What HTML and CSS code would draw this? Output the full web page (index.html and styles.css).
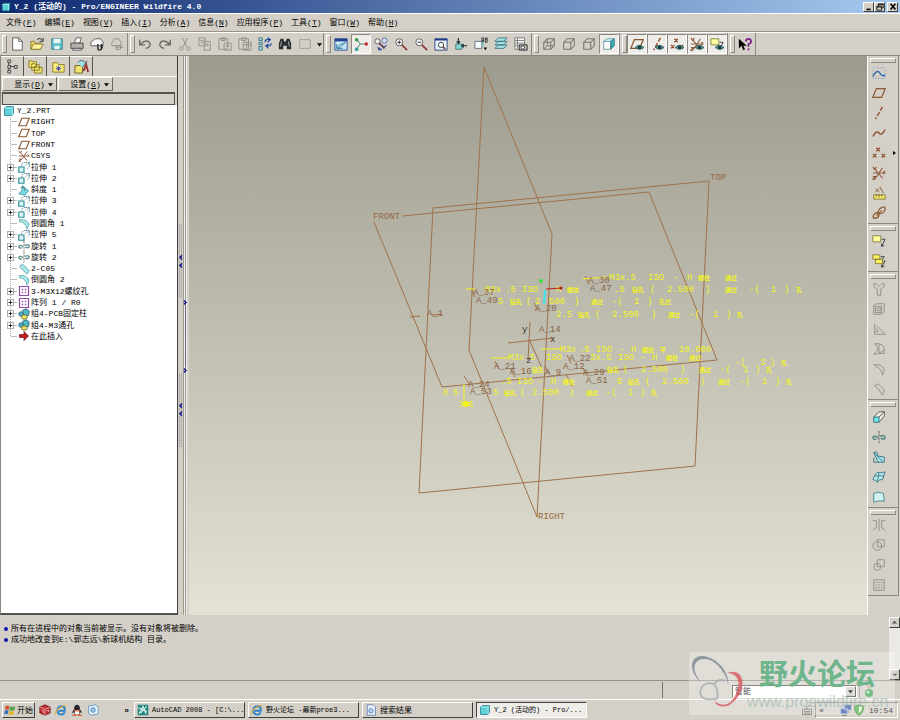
FILE: index.html
```html
<!DOCTYPE html>
<html lang="zh-CN">
<head>
  <meta charset="UTF-8">
  <title>Y_2 (活动的) - Pro/ENGINEER Wildfire 4.0</title>
  <link rel="stylesheet" href="styles.css">
</head>
<body>
  <svg class="sprite" aria-hidden="true">
    <symbol id="part" viewBox="0 0 16 16"><path d="M2 4l3-2h9v9l-2 3H2z" fill="#5cd0d6" stroke="#2a6f86"/><path d="M2 4h10v10M12 4l2-2" fill="none" stroke="#b8f4f4"/></symbol>
    <symbol id="plane" viewBox="0 0 16 16"><path d="M5 3h10l-4 10H1z" fill="none" stroke="#8a5a35" stroke-width="1.5"/></symbol>
    <symbol id="axis" viewBox="0 0 16 16"><path d="M12 1L4 15" fill="none" stroke="#8f4a2c" stroke-width="1.6" stroke-dasharray="5 2"/></symbol>
    <symbol id="points" viewBox="0 0 16 16"><path d="M5 2l4 4m0-4L5 6M1 9l4 4m0-4l-4 4M11 9l4 4m0-4l-4 4" fill="none" stroke="#8f4a2c" stroke-width="1.4"/></symbol>
    <symbol id="csys" viewBox="0 0 16 16"><path d="M3 3l9 11M12 2L4 14M1 8h12M1 1l2 3 2-3M13 6l2 3m0-3l-2 3M1 12h3l-3 3h3" fill="none" stroke="#8f5a3c" stroke-width="1.3"/></symbol>
    <symbol id="eye" viewBox="0 0 16 16"><path d="M6 12q4.500-5 10 0-5 4-10 0z" fill="#5b9a90" stroke="#2b5753"/><circle cx="11" cy="12" r="2" fill="#123b44"/></symbol>
    <symbol id="extrude" viewBox="0 0 16 16"><path d="M1 8h7v7H1z" fill="#d8f4f4" stroke="#2f8d95" stroke-width="1.5"/><path d="M5 7V4l3-2h7v6l-3 3M10 6l5-4M10 2h5v5" fill="none" stroke="#477e8e" stroke-dasharray="2 1"/></symbol>
    <symbol id="revolve" viewBox="0 0 16 16"><path d="M8 1v14" stroke="#555" stroke-dasharray="3 1"/><path d="M7 9q-5-4-6 0 1 3 4 1M9 7q6-2 6 2-2 3-5 0" fill="none" stroke="#407c75" stroke-width="1.500"/></symbol>
    <symbol id="draft" viewBox="0 0 16 16"><path d="M6 2l8 7-5 6-8-2 4-4z" fill="#7ad9de" stroke="#2c8894"/><path d="M3 5q6-2 6 4" fill="none" stroke="#567"/></symbol>
    <symbol id="round" viewBox="0 0 16 16"><path d="M2 2q9-1 13 6l-3 7Q11 6 2 5z" fill="#a5e9ea" stroke="#5c9fa4"/></symbol>
    <symbol id="chamfer" viewBox="0 0 16 16"><path d="M3 3l4-1 8 8-3 5-9-9z" fill="#a8e5e7" stroke="#5c9fa4"/></symbol>
    <symbol id="pattern" viewBox="0 0 16 16"><path d="M2 2h12v12H2z" fill="#fff" stroke="#8f4da4" stroke-width="1.600"/><path d="M5 5h2v2H5zM9 5h2v2H9zM5 9h2v2H5zM9 9h2v2H9z" fill="#a05aae"/></symbol>
    <symbol id="group" viewBox="0 0 16 16"><path d="M6 3l5-2 4 3-1 6-5 2z" fill="#4fbcc4" stroke="#24506c"/><circle cx="4" cy="8" r="3" fill="#51b2ce" stroke="#24506c"/><path d="M5 10l3-1 4 1v4l-4 1-3-1z" fill="#ece56a" stroke="#62601f"/></symbol>
    <symbol id="insert" viewBox="0 0 16 16"><path d="M2 6h6V2l6 6-6 6v-4H2z" fill="#c01c22" stroke="#72181b"/></symbol>
    <symbol id="plus" viewBox="0 0 9 9"><path d="M.5.5h8v8h-8z" fill="#fff" stroke="#888"/><path d="M2 4.500h5M4.500 2v5" stroke="#000"/></symbol>
    <symbol id="note" viewBox="0 0 16 16"><path d="M1 2h9v7H1z" fill="#ffffa0" stroke="#7c7a3c"/><path d="M11 6h4l-4 8m0-3v3l3-1" fill="none" stroke="#333"/></symbol>
    <symbol id="box" viewBox="0 0 16 16"><path d="M2 6h8v8H2zM2 6l4-4h8v8l-4 4M10 6l4-4" fill="none" stroke="#77746d" stroke-width="1.200"/></symbol>
    <symbol id="lens" viewBox="0 0 16 16"><circle cx="6" cy="6" r="4" fill="#f4f4f4" stroke="#555"/><path d="M9 9l6 6" stroke="#8c3f36" stroke-width="2"/></symbol>
    <symbol id="ie" viewBox="0 0 16 16"><path d="M13 11q-2 4-6 3-4-1-4-6 1-5 6-5 5 1 4 6H5" fill="none" stroke="#2b83cf" stroke-width="2.400"/><path d="M1 14Q-1 10 8 4q6-4 7 0" fill="none" stroke="#e0b13a" stroke-width="1.400"/></symbol>
    <symbol id="down" viewBox="0 0 8 8"><path d="M0 2h8L4 7z" fill="#000"/></symbol>
  </svg>

  <header class="titlebar">
    <svg class="icon-sm"><use href="#part"/></svg>
    <h1>Y_2 (活动的) - Pro/ENGINEER Wildfire 4.0</h1>
    <div class="window-buttons">
      <button aria-label="最小化"><svg viewBox="0 0 10 10"><path d="M2 8h5" stroke="#000" stroke-width="2"/></svg></button>
      <button aria-label="还原"><svg viewBox="0 0 10 10"><path d="M3 4V1h6v5H7M1 4h6v5H1zM1 5h6M3 2h6" fill="none" stroke="#000"/></svg></button>
      <button class="close" aria-label="关闭"><svg viewBox="0 0 10 10"><path d="M2 1l6 7M8 1L2 8" stroke="#000" stroke-width="2"/></svg></button>
    </div>
  </header>

  <nav class="menubar">
    <button>文件(<u>F</u>)</button>
    <button>编辑(<u>E</u>)</button>
    <button>视图(<u>V</u>)</button>
    <button>插入(<u>I</u>)</button>
    <button>分析(<u>A</u>)</button>
    <button>信息(<u>N</u>)</button>
    <button>应用程序(<u>P</u>)</button>
    <button>工具(<u>T</u>)</button>
    <button>窗口(<u>W</u>)</button>
    <button>帮助(<u>H</u>)</button>
  </nav>

  <div class="toolbar">
    <div class="tool-group">
      <button aria-label="新建"><svg viewBox="0 0 16 16"><path d="M3 1h7l4 4v10H3z" fill="#fff" stroke="#555"/><path d="M10 1v4h4" fill="none" stroke="#555"/></svg></button>
      <button aria-label="打开"><svg viewBox="0 0 16 16"><path d="M1 14V5h4l1 2h6v7z" fill="#f0dc62" stroke="#84712a"/><path d="M1 14l3-6h11l-3 6z" fill="#fff3a0" stroke="#84712a"/><path d="M8 3q4-3 6 1m1-3v4h-4" fill="none" stroke="#222"/></svg></button>
      <button aria-label="保存"><svg viewBox="0 0 16 16"><path d="M2 2h12v12H2z" fill="#59bfc8" stroke="#3d7986"/><path d="M4 2h8v5H4zM5 10h6v4H5z" fill="#e8f6f6"/></svg></button>
      <button aria-label="打印"><svg viewBox="0 0 16 16"><path d="M5 7l2-6h6l-2 6z" fill="#fff" stroke="#555"/><path d="M1 7h14v6H1z" fill="#b5b2aa" stroke="#444"/><path d="M3 13h10v2H3z" fill="#eee" stroke="#555"/></svg></button>
      <button aria-label="发送"><svg viewBox="0 0 16 16"><path d="M1 6l5-4h6l3 4v4H1z" fill="#f8f8f8" stroke="#555"/><path d="M9 8v4q0 3 2 3t3-3l-1-4v5" fill="none" stroke="#222" stroke-width="1.500"/></svg></button>
      <button aria-label="链接"><svg viewBox="0 0 16 16" class="off"><path d="M2 7l3-5h5l3 5v3H2zM7 12h3m1 0h4M7 10h5v4H7z"/></svg></button>
    </div>
    <div class="tool-group">
      <button aria-label="撤消"><svg viewBox="0 0 16 16" class="undo"><path d="M3 8q8-7 11 0 0 4-5 5M2 3v6h6"/></svg></button>
      <button aria-label="重做"><svg viewBox="0 0 16 16" class="undo"><path d="M13 8Q5 1 2 8q0 4 5 5M14 3v6H8"/></svg></button>
      <button aria-label="剪切"><svg viewBox="0 0 16 16" class="off"><path d="M5 1l5 10M11 1L6 11"/><circle cx="4" cy="13" r="2"/><circle cx="12" cy="13" r="2"/></svg></button>
      <button aria-label="复制"><svg viewBox="0 0 16 16" class="off"><path d="M1 1h7v9H1zM7 5h7v10H7zM3 4h3M3 6h3M9 8h3M9 10h3"/></svg></button>
      <button aria-label="粘贴"><svg viewBox="0 0 16 16" class="off"><path d="M1 2h10v12H1zM4 1h4v3H4zM7 7h8v8H7zM9 10h4"/></svg></button>
      <button aria-label="选择性粘贴"><svg viewBox="0 0 16 16" class="off"><path d="M1 2h11v12H1zM4 1h5v3H4zM6 6h9v9H6zM6 9h9M10 6v9"/></svg></button>
      <button aria-label="重新生成"><svg viewBox="0 0 16 16"><path d="M1 1h4v3H1zM1 6h4v3H1zM1 11h4v4H1z" fill="#8bd8da" stroke="#4b7580"/><path d="M8 6q0-4 5-3m-2-2l3 2-3 3M15 7q0 4-5 3m2 3l-3-3 3-2" fill="none" stroke="#254d9d" stroke-width="1.500"/></svg></button>
      <button aria-label="查找"><svg viewBox="0 0 16 16"><path d="M3 2h3l1 3h2l1-3h3l2 5v7h-5v-4H6v4H1V7z" fill="#292d31"/><path d="M4 5L3 11M12 5l1 6" stroke="#b6c3c6"/></svg></button>
      <button aria-label="选取框"><svg viewBox="0 0 16 16" class="off"><path d="M2 3h12v10H2z" stroke-dasharray="3 1"/></svg></button>
      <button class="drop" aria-label="选取方式"><svg viewBox="0 0 8 8"><use href="#down"/></svg></button>
    </div>
    <div class="tool-group">
      <button aria-label="重画"><svg viewBox="0 0 16 16"><path d="M1 2h14v13H1z" fill="#c6e7f6" stroke="#244c91"/><path d="M1 2h14v3H1z" fill="#233f91"/><path d="M13 6l-6 6-3 1 1-3zM3 8v5h7" fill="none" stroke="#2f7698"/></svg></button>
      <button class="on" aria-label="旋转中心"><svg viewBox="0 0 16 16"><path d="M3 2l4 6h7M7 8l-4 6" fill="none" stroke="#3c7c66"/><circle cx="3" cy="3" r="2" fill="#2b9a45"/><circle cx="14" cy="8" r="2" fill="#c1262b"/><circle cx="3" cy="14" r="2" fill="#2a9b94"/></svg></button>
      <button aria-label="定向模式"><svg viewBox="0 0 16 16"><circle cx="4" cy="5" r="3" fill="#eee" stroke="#555"/><circle cx="12" cy="4" r="3" fill="#d6def3" stroke="#536ba9"/><path d="M6 7l6 6" stroke="#603f5f" stroke-width="2"/><path d="M14 9q0 3-3 2M4 12q1 3 5 2" fill="none" stroke="#263c95"/><path d="M5 11v4h4z" fill="#263c95"/></svg></button>
      <button aria-label="放大"><svg viewBox="0 0 16 16"><use href="#lens"/><path d="M4 6h4M6 4v4" stroke="#222"/></svg></button>
      <button aria-label="缩小"><svg viewBox="0 0 16 16"><use href="#lens"/><path d="M4 6h4" stroke="#222"/></svg></button>
      <button aria-label="重新调整"><svg viewBox="0 0 16 16"><path d="M1 2h14v13H1z" fill="#e7f1f6" stroke="#24407e"/><path d="M1 2h14v2H1z" fill="#203a8c"/><circle cx="8" cy="9" r="3" fill="#fff" stroke="#333"/><path d="M10 11l3 3" stroke="#744" stroke-width="2"/></svg></button>
      <button aria-label="重定向"><svg viewBox="0 0 16 16"><path d="M2 8h7v6H2z" fill="#8bd3d6" stroke="#477"/><path d="M5 1v6m-2-2l2 2 2-2M15 10H9m2-2l-2 2 2 2" fill="none" stroke="#142f36" stroke-width="1.300"/></svg></button>
      <button aria-label="视图列表"><svg viewBox="0 0 16 16"><path d="M1 5h8v8H1z" fill="#f8fbfb" stroke="#567"/><path d="M9 5l2-2v7l-2 3" fill="#70bfc5"/><path d="M9 6V1h2v5M9 4h2M13 1h2v5h-2zM13 3h2" fill="none" stroke="#333"/><path d="M11 12h4l-2 3z"/></svg></button>
      <button aria-label="层"><svg viewBox="0 0 16 16"><path d="M1 13l4-4h10l-4 4zM1 9l4-4h10l-4 4zM1 5l4-4h10l-4 4z" fill="#a8dde1" stroke="#397681"/></svg></button>
      <button aria-label="视图管理器"><svg viewBox="0 0 16 16"><path d="M1 1h11v13H1zM1 4h11M1 7h11M1 10h11M4 1v13" fill="#f6f6f6" stroke="#777"/><path d="M6 9h9v6H6z" fill="#c4c7c7" stroke="#222"/><circle cx="10" cy="12" r="2" fill="#fff" stroke="#222"/></svg></button>
    </div>
    <div class="tool-group">
      <button aria-label="线框"><svg viewBox="0 0 16 16"><use href="#box"/><path d="M6 2v8h8M6 10l-4 4" fill="none" stroke="#77746d"/></svg></button>
      <button aria-label="隐藏线"><svg><use href="#box"/></svg></button>
      <button aria-label="无隐藏线"><svg><use href="#box"/></svg></button>
      <button class="on" aria-label="着色"><svg viewBox="0 0 16 16"><path d="M2 5h8v9H2z" fill="#fff" stroke="#5e9ba4"/><path d="M2 5l4-3h8l-4 3z" fill="#d1f4f4" stroke="#5e9ba4"/><path d="M10 5l4-3v8l-4 4z" fill="#3bb1b7" stroke="#32717e"/></svg></button>
    </div>
    <div class="tool-group">
      <button class="on" aria-label="基准平面"><svg viewBox="0 0 16 16"><use href="#plane"/><use href="#eye"/></svg></button>
      <button class="on" aria-label="基准轴"><svg viewBox="0 0 16 16"><use href="#axis"/><use href="#eye"/></svg></button>
      <button class="on" aria-label="基准点"><svg viewBox="0 0 16 16"><use href="#points"/><use href="#eye"/></svg></button>
      <button class="on" aria-label="坐标系"><svg viewBox="0 0 16 16"><use href="#csys"/><use href="#eye"/></svg></button>
      <button class="on" aria-label="注释显示"><svg viewBox="0 0 16 16"><use href="#note"/><use href="#eye"/></svg></button>
    </div>
    <div class="tool-group">
      <button aria-label="上下文帮助"><svg viewBox="0 0 16 16"><path d="M1 2v11l3-3 2 5 2-1-2-4h4z"/><path d="M9 5q0-3 3-3t3 3q0 2-3 3v3M12 13v2" fill="none" stroke="#7c2388" stroke-width="2"/></svg></button>
    </div>
  </div>

  <main class="workspace">
    <aside class="navigator">
      <div class="tabs">
        <button class="tab active" aria-label="模型树"><svg viewBox="0 0 16 16"><path d="M3 1h3v3H3zM3 7h3v3H3zM3 12h3v3H3zM10 7h3v3h-3zM6 8h4M4 4v3M4 10v2" fill="none" stroke="#444"/></svg></button>
        <button class="tab" aria-label="文件夹"><svg viewBox="0 0 16 16"><path d="M1 2h3l1 1h4v6H1zM4 5h3l1 1h4v6H4zM7 8h3l1 1h4v6H7z" fill="#efe56b" stroke="#8b792a"/></svg></button>
        <button class="tab" aria-label="收藏夹"><svg viewBox="0 0 16 16"><path d="M2 4h5l1 2h6v8H2z" fill="#fff27a" stroke="#8b792a"/><path d="M8 7v6M5 10h6M6 8l4 4M10 8l-4 4" stroke="#4b4cad"/></svg></button>
        <button class="tab" aria-label="连接"><svg viewBox="0 0 16 16"><path d="M1 7h8v8H1z" fill="#f2e66d" stroke="#6e6226"/><path d="M4 4q4-5 8 0l2-2-5 7" fill="#a0dce2" stroke="#4c6671"/><path d="M10 13l3-7 2 8" fill="none" stroke="#97372e" stroke-width="2"/></svg></button>
      </div>
      <div class="tree-actions">
        <button>显示(<u>D</u>)<svg><use href="#down"/></svg></button>
        <button>设置(<u>G</u>)<svg><use href="#down"/></svg></button>
      </div>
      <div class="tree-header"></div>
      <div class="tree-pane">
        <ul class="tree">
          <li class="root"><svg class="icon-sm"><use href="#part"/></svg>Y_2.PRT</li>
          <li><i></i><svg class="icon-sm"><use href="#plane"/></svg>RIGHT</li>
          <li><i></i><svg class="icon-sm"><use href="#plane"/></svg>TOP</li>
          <li><i></i><svg class="icon-sm"><use href="#plane"/></svg>FRONT</li>
          <li><i></i><svg class="icon-sm"><use href="#csys"/></svg>CSYS</li>
          <li><i><svg><use href="#plus"/></svg></i><svg class="icon-sm"><use href="#extrude"/></svg>拉伸 1</li>
          <li><i><svg><use href="#plus"/></svg></i><svg class="icon-sm"><use href="#extrude"/></svg>拉伸 2</li>
          <li><i></i><svg class="icon-sm"><use href="#draft"/></svg>斜度 1</li>
          <li><i><svg><use href="#plus"/></svg></i><svg class="icon-sm"><use href="#extrude"/></svg>拉伸 3</li>
          <li><i><svg><use href="#plus"/></svg></i><svg class="icon-sm"><use href="#extrude"/></svg>拉伸 4</li>
          <li><i></i><svg class="icon-sm"><use href="#round"/></svg>倒圆角 1</li>
          <li><i><svg><use href="#plus"/></svg></i><svg class="icon-sm"><use href="#extrude"/></svg>拉伸 5</li>
          <li><i><svg><use href="#plus"/></svg></i><svg class="icon-sm"><use href="#revolve"/></svg>旋转 1</li>
          <li><i><svg><use href="#plus"/></svg></i><svg class="icon-sm"><use href="#revolve"/></svg>旋转 2</li>
          <li><i></i><svg class="icon-sm"><use href="#chamfer"/></svg>2-C05</li>
          <li><i></i><svg class="icon-sm"><use href="#round"/></svg>倒圆角 2</li>
          <li><i><svg><use href="#plus"/></svg></i><svg class="icon-sm"><use href="#pattern"/></svg>3-M3X12螺纹孔</li>
          <li><i><svg><use href="#plus"/></svg></i><svg class="icon-sm"><use href="#pattern"/></svg>阵列 1 / R0</li>
          <li><i><svg><use href="#plus"/></svg></i><svg class="icon-sm"><use href="#group"/></svg>组4-PCB固定柱</li>
          <li><i><svg><use href="#plus"/></svg></i><svg class="icon-sm"><use href="#group"/></svg>组4-M3通孔</li>
          <li><i></i><svg class="icon-sm"><use href="#insert"/></svg>在此插入</li>
        </ul>
      </div>
    </aside>

    <div class="sash">
      <svg viewBox="0 0 10 558" preserveAspectRatio="xMidYMin slice">
        <path d="M5.500 0v558M7.500 0v558" stroke="#9b988f"/><path d="M6.500 0v558M8.500 0v558" stroke="#f2f0eb"/>
        <path d="M1.500 168v74M3.500 168v74M1.500 317v74M3.500 317v74" stroke="#8e8b84" stroke-dasharray="1 1"/>
        <path d="M7.500 249v62" stroke="#34348c" stroke-dasharray="1 1"/>
        <path d="M4 199l-2 2 2 2M4 207l-2 2 2 2M4 347l-2 2 2 2M4 355l-2 2 2 2M6 244l2 2-2 2M6 312l2 2-2 2" fill="none" stroke="#15158c" stroke-width="1.500"/>
      </svg>
    </div>

    <section class="viewport">
      <svg viewBox="189 56 678 558" preserveAspectRatio="xMinYMin meet">
        <!-- datum planes -->
        <g class="datum">
          <path d="M484 67L552 234L537 517L469 350Z"/>
          <path d="M433 208L709 181L695 466L419 493Z"/>
          <path d="M402 216L649 192L717 360L442 387L374 222"/>
          <path d="M508 343L553 338M530 322L528 360M529 339L542 368M410 317l10-1M432 315l10-1" />
          <path d="M471 289l4 8M534 303l4 8M585 276l4 8M567 355l4 8M495 361l4 8M510 368l5 9M583 368l4 8M464 376l6 9M545 366l4 8M566 374l6 12"/>
        </g>
        <g class="datum-name">
          <text x="373" y="219">FRONT</text>
          <text x="710" y="180">TOP</text>
          <text x="538" y="519">RIGHT</text>
        </g>
        <!-- hole notes -->
        <g class="note">
          <path d="M583 279l24-2M466 289h10M541 349h20M491 358h18M464 384v22M459 401l14 6M460 407l12-6M461 404h12"/>
          <circle cx="466" cy="404" r="3"/>
          <text y="280"><tspan x="609">M3x.5</tspan><tspan x="648">ISO</tspan><tspan x="673">-</tspan><tspan x="687">H</tspan><tspan class="cn" x="698">螺栓</tspan><tspan class="cn" x="725">通过</tspan></text>
          <text y="292"><tspan x="485">M3x</tspan><tspan x="505">.5</tspan><tspan x="522">ISO</tspan><tspan x="556">H</tspan><tspan class="cn" x="567">螺纹</tspan><tspan x="614">.5</tspan><tspan class="cn" x="632">钻孔</tspan><tspan x="650">(</tspan><tspan x="667">2.500</tspan><tspan x="705">)</tspan><tspan class="cn" x="725">通过</tspan><tspan x="749">-(</tspan><tspan x="771">1</tspan><tspan x="784">)</tspan><tspan class="cn" x="796">孔</tspan></text>
          <text y="304"><tspan x="498">5</tspan><tspan class="cn" x="510">钻孔</tspan><tspan x="526">(</tspan><tspan x="535">2</tspan><tspan x="549">500</tspan><tspan x="574">)</tspan><tspan class="cn" x="591">通过</tspan><tspan x="612">-(</tspan><tspan x="634">1</tspan><tspan x="647">)</tspan><tspan class="cn" x="659">孔过</tspan></text>
          <text y="317"><tspan x="556">2.5</tspan><tspan class="cn" x="578">钻孔</tspan><tspan x="595">(</tspan><tspan x="612">2.500</tspan><tspan x="651">)</tspan><tspan class="cn" x="668">通过</tspan><tspan x="689">-(</tspan><tspan x="713">1</tspan><tspan x="726">)</tspan><tspan class="cn" x="737">孔</tspan></text>
          <text y="352"><tspan x="560">M3x</tspan><tspan x="579">.5</tspan><tspan x="596">ISO</tspan><tspan x="619">-</tspan><tspan x="631">H</tspan><tspan class="cn" x="642">螺纹</tspan><tspan class="cn" x="660">平</tspan><tspan x="679">10.000</tspan></text>
          <text y="360"><tspan x="508">M3x</tspan><tspan x="530">5</tspan><tspan x="546">ISO</tspan><tspan x="590">3x.5</tspan><tspan x="618">ISO</tspan><tspan x="640">-</tspan><tspan x="652">H</tspan><tspan class="cn" x="666">螺栓</tspan><tspan class="cn" x="689">通过</tspan></text>
          <text y="365"><tspan x="735">-(</tspan><tspan x="760">3</tspan><tspan x="770">)</tspan><tspan class="cn" x="781">孔</tspan></text>
          <text y="372"><tspan class="cn" x="532">钻孔</tspan><tspan class="cn" x="607">钻孔</tspan><tspan x="623">(</tspan><tspan x="641">2.500</tspan><tspan x="680">)</tspan><tspan class="cn" x="699">通过</tspan><tspan x="720">-(</tspan><tspan x="743">1</tspan><tspan x="755">)</tspan><tspan class="cn" x="766">孔</tspan></text>
          <text y="384"><tspan x="501">.5</tspan><tspan x="517">ISO</tspan><tspan x="538">-</tspan><tspan x="551">H</tspan><tspan class="cn" x="563">螺栓</tspan><tspan x="617">5</tspan><tspan class="cn" x="628">钻孔</tspan><tspan x="645">(</tspan><tspan x="662">2.500</tspan><tspan x="700">)</tspan><tspan class="cn" x="718">通过</tspan><tspan x="740">-(</tspan><tspan x="762">1</tspan><tspan x="775">)</tspan><tspan class="cn" x="786">孔</tspan></text>
          <text y="395"><tspan x="443">8</tspan><tspan x="453">5</tspan><tspan x="493">5</tspan><tspan class="cn" x="504">钻孔</tspan><tspan x="520">(</tspan><tspan x="532">2.500</tspan><tspan x="569">)</tspan><tspan class="cn" x="586">通过</tspan><tspan x="606">-(</tspan><tspan x="628">1</tspan><tspan x="640">)</tspan><tspan class="cn" x="651">孔</tspan></text>
        </g>
        <!-- hole axes -->
        <g class="axis-name">
          <text x="427" y="316">A_1</text>
          <text x="473" y="295">A_37</text>
          <text x="476" y="303">A_49</text>
          <text x="535" y="311">A_20</text>
          <text x="539" y="332">A_14</text>
          <text x="588" y="283">A_30</text>
          <text x="590" y="291">A_47</text>
          <text x="494" y="369">A_21</text>
          <text x="510" y="374">A_16</text>
          <text x="545" y="375">A_9</text>
          <text x="569" y="361">A_22</text>
          <text x="563" y="369">A_12</text>
          <text x="583" y="375">A_29</text>
          <text x="586" y="383">A_51</text>
          <text x="468" y="387">A_24</text>
          <text x="470" y="394">A_53</text>
        </g>
        <g class="csys-name">
          <text x="522" y="332">y</text>
          <text x="550" y="342">x</text>
          <text x="526" y="363">z</text>
        </g>
        <circle cx="541" cy="281" r="2" fill="#39e341"/>
        <path d="M546 289l15-1" stroke="#c61818"/>
        <circle cx="561" cy="288" r="1.500" fill="#b01414"/>
        <path d="M545 290l-1 14" stroke="#3ce6e6" stroke-width="2"/>
      </svg>
    </section>

    <div class="side-toolbar">
      <div class="side-group">
        <button aria-label="草绘"><svg viewBox="0 0 16 16"><path d="M1 2h14M1 14h14M1 5v7M15 5v7" stroke="#4d86c8" stroke-dasharray="1 2"/><path d="M1 12q5-9 8-4t6 2" fill="none" stroke="#2867a8" stroke-width="1.600"/></svg></button>
        <button aria-label="平面"><svg><use href="#plane"/></svg></button>
        <button aria-label="轴"><svg><use href="#axis"/></svg></button>
        <button aria-label="曲线"><svg viewBox="0 0 16 16"><path d="M1 12q4-8 7-4t7-4" fill="none" stroke="#8f4a2c" stroke-width="1.500"/></svg></button>
        <button class="more" aria-label="点"><svg><use href="#points"/></svg></button>
        <button aria-label="坐标系"><svg><use href="#csys"/></svg></button>
        <button aria-label="分析"><svg viewBox="0 0 16 16"><path d="M2 10h13v5H2z" fill="#f1e66c" stroke="#7f7830"/><path d="M5 10v2M8 10v3M11 10v2M4 3l4 4m0-4L4 7M9 1l4 7" stroke="#805027"/></svg></button>
        <button aria-label="参照"><svg viewBox="0 0 16 16"><path d="M2 14q-2-3 2-6 4-1 4 2 0 4-6 4zM7 9q-1-3 2-6 6-4 6 0 0 4-6 6zM5 11l6-6" fill="none" stroke="#94633c" stroke-width="1.600"/></svg></button>
      </div>
      <div class="side-group">
        <button aria-label="注释"><svg><use href="#note"/></svg></button>
        <button aria-label="传播"><svg viewBox="0 0 16 16"><path d="M1 1h8v5H1zM4 6h8v5H4z" fill="#fff45e" stroke="#7c7a3c"/><path d="M10 3h4l-2 3M13 8h2l-4 7v-3m0 3l3-1" fill="none" stroke="#333"/></svg></button>
      </div>
      <div class="side-group">
        <button aria-label="孔"><svg viewBox="0 0 16 16" class="off"><path d="M2 2h3l3 3 3-3h3v3l-4 3v7H6V8L2 5z"/></svg></button>
        <button aria-label="壳"><svg viewBox="0 0 16 16" class="off"><path d="M2 4l3-2h9v9l-3 3H2zM4 5h7v7H4zM6 7h4v3H6z"/></svg></button>
        <button aria-label="筋"><svg viewBox="0 0 16 16" class="off"><path d="M3 2v12h12L5 4M3 11h4l-2-4"/></svg></button>
        <button aria-label="拔模"><svg viewBox="0 0 16 16" class="off"><path d="M3 2h5v11l-6 1 4-4V6zM8 2q5 1 6 5v6H8l6-4"/></svg></button>
        <button aria-label="倒圆角"><svg viewBox="0 0 16 16" class="off"><path d="M2 3q10-1 12 6l-2 6Q11 7 4 5z" /></svg></button>
        <button aria-label="倒角"><svg viewBox="0 0 16 16" class="off"><path d="M3 4l4-2 7 7-2 6-4-6z"/></svg></button>
      </div>
      <div class="side-group">
        <button aria-label="拉伸"><svg viewBox="0 0 16 16"><path d="M2 8l6-6h6v5l-6 7" fill="#e8e8e4" stroke="#555"/><path d="M8 8l6-6" stroke="#555"/><path d="M2 8h6v6H2z" fill="#74e2e2" stroke="#276a72"/></svg></button>
        <button aria-label="旋转"><svg><use href="#revolve"/></svg></button>
        <button aria-label="扫描"><svg viewBox="0 0 16 16"><path d="M2 3l3-1 2 5 7 1v6H7z" fill="#a9e4e6" stroke="#33707b"/><path d="M2 3l10 10M2 9v5h5" fill="none" stroke="#33707b"/></svg></button>
        <button aria-label="边界混合"><svg viewBox="0 0 16 16"><path d="M1 11q3-9 7-8t7-1l-3 9q-4-1-6 3-2-3-5-3z" fill="#b8edef" stroke="#39757f"/><path d="M3 7q6-1 11 0M8 3L6 14" fill="none" stroke="#39757f"/></svg></button>
        <button aria-label="造型"><svg viewBox="0 0 16 16"><path d="M2 4q6-3 11 0l1 9q-5-2-12 1z" fill="#d0f2f2" stroke="#3e828a"/></svg></button>
      </div>
      <div class="side-group">
        <button aria-label="镜像"><svg viewBox="0 0 16 16" class="off"><path d="M8 1v14M1 3h4v8l-4 3M15 3h-4v8l4 3"/></svg></button>
        <button aria-label="合并"><svg viewBox="0 0 16 16" class="off"><circle cx="6" cy="9" r="5"/><path d="M6 2h8v8H6z"/></svg></button>
        <button aria-label="修剪"><svg viewBox="0 0 16 16" class="off"><circle cx="6" cy="10" r="4"/><path d="M6 2h8v8H6z"/></svg></button>
        <button aria-label="阵列"><svg viewBox="0 0 16 16" class="off"><path d="M2 2h12v12H2zM4 5h2M7 5h2M10 5h2M4 8h2M7 8h2M10 8h2M4 11h2M7 11h2M10 11h2"/></svg></button>
      </div>
    </div>
  </main>

  <section class="messages">
    <ul>
      <li>所有在进程中的对象当前被显示。没有对象将被删除。</li>
      <li>成功地改变到E:\郭志远\新球机结构 目录。</li>
    </ul>
    <div class="scrollbar">
      <button aria-label="向上"><svg viewBox="0 0 8 8"><path d="M1 5h6L4 2z" fill="#555"/></svg></button>
      <button aria-label="向下"><svg viewBox="0 0 8 8"><path d="M1 3h6L4 6z" fill="#555"/></svg></button>
    </div>
  </section>

  <footer class="statusbar">
    <div class="status-cell">
      <div class="filter">
        <select aria-label="选取过滤器"><option>智能</option></select>
        <span class="filter-arrow"><svg><use href="#down"/></svg></span>
      </div>
    </div>
    <svg class="signal" viewBox="0 0 10 16"><circle cx="5" cy="3" r="2" fill="none" stroke="#d9a293"/><path d="M5 5v4" stroke="#888"/><circle cx="5" cy="11" r="4" fill="#37a04d"/><circle cx="4" cy="10" r="1.500" fill="#b7edbf"/></svg>
  </footer>

  <div class="taskbar">
    <button class="start"><svg viewBox="0 0 16 16"><path d="M2 3q3-2 5 0L6 8Q3 6 1 8z" fill="#d64d2d"/><path d="M8 3q3 2 7 0l-1 5q-4 2-7 0z" fill="#55a44a"/><path d="M1 9q3-2 5 0l-1 5q-3-2-5 0z" fill="#3d6ec0"/><path d="M7 9q3 2 7 0l-1 5q-4 2-7 0z" fill="#e3b637"/></svg>开始</button>
    <div class="quick">
      <button aria-label="SolidWorks"><svg viewBox="0 0 16 16"><path d="M1 4l7-3 7 3v8l-7 3-7-3z" fill="#bd292f" stroke="#732528"/><path d="M1 4l7 3 7-3M8 7v8M3 8l3 1v3M10 9l3-1v3" fill="none" stroke="#f3c8c4"/></svg></button>
      <button aria-label="Internet Explorer"><svg><use href="#ie"/></svg></button>
      <button aria-label="QQ"><svg viewBox="0 0 16 16"><path d="M4 7q0-6 4-6t4 6l3 5-3-1-1 3H5l-1-3-3 1z" fill="#27242a"/><path d="M5 9q3-2 6 0v4q-3 2-6 0z" fill="#fff"/><path d="M4 7q4 3 8 0v2q-4 2-8 0zM2 14h5v2H2zM9 14h5v2H9z" fill="#dd532c"/></svg></button>
      <button aria-label="显示桌面"><svg viewBox="0 0 16 16"><path d="M2 3l9-2 4 3v9l-9 2-4-3z" fill="#e6f2fb" stroke="#4d87bd"/><circle cx="8" cy="8" r="3" fill="#9ecbec" stroke="#3a72a9"/></svg></button>
    </div>
    <span class="chevron">»</span>
    <button class="task"><svg viewBox="0 0 16 16"><path d="M1 1h14v14H1z" fill="#24877e"/><path d="M3 13l5-10 4 10M2 5l11 5M13 3L5 12" fill="none" stroke="#dff5ee" stroke-width="1.500"/></svg>AutoCAD 2008 - [C:\...</button>
    <button class="task"><svg><use href="#ie"/></svg>野火论坛 -最新proe3...</button>
    <button class="task cn-only"><svg viewBox="0 0 16 16"><path d="M3 1h8l3 3v11H3z" fill="#e9f2fb" stroke="#5776ad"/><circle cx="8" cy="9" r="3" fill="#b5d4ed" stroke="#4773b0"/></svg>搜索结果</button>
    <button class="task current"><svg><use href="#part"/></svg>Y_2 (活动的) - Pro/...</button>
    <div class="tray">
      <svg viewBox="0 0 16 16"><path d="M2 7h12v7H2zM4 10h8M4 12h8M7 7q0-4 6-5" fill="none" stroke="#444"/></svg>
      <div class="tray-box">
        <span class="chevron">«</span>
        <svg viewBox="0 0 16 16"><path d="M6 1h9v7H6zM1 6h9v7H1z" fill="#314f9f" stroke="#a7b7db"/><path d="M3 15h6M12 9v3" stroke="#556"/></svg>
        <svg viewBox="0 0 16 16"><path d="M8 1l6 2q1 8-6 12Q1 11 2 3z" fill="#4cae45" stroke="#2e792d"/><path d="M8 3l4 1q0 5-4 8z" fill="#e5f8d8"/></svg>
        <time>10:54</time>
      </div>
    </div>
  </div>

  <div class="watermark">
    <svg viewBox="0 0 62 62">
      <path d="M42 36Q43 20 28 9 12 0 5 8q-6 12 8 25Q-1 14 12 8q12-3 22 10 7 9 8 18z" fill="#7b8794"/>
      <path d="M41 22q13-4 16 8 2 16-14 27-11 4-16-4 16 10 24-10 7-18-10-21z" fill="#d65860"/>
      <path d="M30 50Q12 53 12 43q2-12 15-9M30 50q2-8-3-16 5-6 12-3" fill="none" stroke="#a8adb1" stroke-width="2"/>
    </svg>
    <div class="watermark-text">
      <strong>野火论坛</strong>
      <span>www.proewildfire.cn</span>
    </div>
  </div>
</body>
</html>
```
FILE: styles.css
```css
* {
  box-sizing: border-box;
}
body {
  margin: 0;
  height: 100vh;
  display: flex;
  flex-direction: column;
  overflow: hidden;
  position: relative;
  background: #d4d0c8;
  color: #000;
  font: 8px/11px "Liberation Mono", "Noto Sans CJK SC", monospace;
}
.sprite {
  position: absolute;
  width: 0;
  height: 0;
}
button, select {
  font: inherit;
  color: inherit;
  margin: 0;
  padding: 0;
  border: 0;
  background: none;
  white-space: nowrap;
}
button {
  display: flex;
  align-items: center;
  justify-content: center;
}
svg {
  display: block;
  flex: none;
}
ul {
  list-style: none;
  margin: 0;
  padding: 0;
}
.off {
  fill: none;
  stroke: #8f8c85;
}
.undo {
  fill: none;
  stroke: #66645f;
  stroke-width: 1.5;
}
.icon-sm {
  width: 12px;
  height: 12px;
}

/* title + menu */
.titlebar {
  height: 13px;
  flex: none;
  display: flex;
  align-items: center;
  gap: 3px;
  padding: 0 2px 0 1px;
  background: linear-gradient(to right, #0f2a70, #a6caf0);
  color: #fff;
}
.titlebar .icon-sm {
  width: 10px;
  height: 10px;
}
.titlebar h1 {
  flex: 1;
  margin: 0;
  font-size: 8px;
  font-weight: bold;
}
.window-buttons {
  display: flex;
}
.window-buttons button {
  width: 11px;
  height: 10px;
  background: #d4d0c8;
  border: 1px solid;
  border-color: #fff #404040 #404040 #fff;
}
.window-buttons .close {
  margin-left: 2px;
}
.window-buttons svg {
  width: 8px;
  height: 8px;
}
.menubar {
  height: 19px;
  flex: none;
  display: flex;
  align-items: center;
  gap: 8px;
  padding: 0 6px;
  border-top: 1px solid #fff;
  border-bottom: 1px solid #96938c;
}

/* toolbars */
.toolbar {
  height: 24px;
  flex: none;
  display: flex;
  border-top: 1px solid #fff;
  border-bottom: 1px solid #8b8880;
}
.tool-group {
  display: flex;
  align-items: center;
  padding-left: 7px;
  border-right: 1px solid #8b8880;
  position: relative;
}
.tool-group::before {
  content: "";
  position: absolute;
  left: 2px;
  top: 2px;
  bottom: 2px;
  width: 3px;
  border: 1px solid;
  border-color: #fff #8b8880 #8b8880 #fff;
}
.tool-group button, .side-group button {
  width: 20px;
  height: 20px;
}
.tool-group svg, .side-group svg {
  width: 14px;
  height: 14px;
}
.tool-group .drop {
  width: 8px;
}
.tool-group .drop svg {
  width: 5px;
  height: 5px;
}
.tool-group .on {
  background: #efede9;
  border: 1px solid;
  border-color: #8b8880 #fff #fff #8b8880;
}
.side-toolbar {
  width: 33px;
  flex: none;
  border-left: 1px solid #fff;
}
.side-group {
  display: flex;
  flex-direction: column;
  padding: 7px 0 0 1px;
  margin-right: 1px;
  border-right: 1px solid #8b8880;
  border-bottom: 1px solid #8b8880;
  position: relative;
}
.side-group::before {
  content: "";
  position: absolute;
  left: 2px;
  right: 2px;
  top: 2px;
  height: 3px;
  border: 1px solid;
  border-color: #fff #8b8880 #8b8880 #fff;
}
.side-group .more::after {
  content: "";
  position: absolute;
  right: 2px;
  border: 2px solid transparent;
  border-left: 3px solid #000;
  border-right: 0;
}

/* model tree */
.workspace {
  flex: 1;
  min-height: 0;
  display: flex;
}
.navigator {
  width: 178px;
  flex: none;
  display: flex;
  flex-direction: column;
  border-right: 1px solid #404040;
  border-bottom: 2px solid #55534f;
  border-left: 1px solid #8b8880;
}
.tabs {
  display: flex;
  height: 21px;
  flex: none;
  border-bottom: 1px solid #fff;
}
.tab {
  width: 23px;
  border-right: 1px solid #55534f;
  border-top: 1px solid #fff;
}
.tab svg {
  width: 15px;
  height: 15px;
}
.tree-actions {
  display: flex;
  gap: 1px;
  padding-left: 1px;
}
.tree-actions button {
  width: 55px;
  height: 14px;
  padding-left: 8px;
  border: 1px solid;
  border-color: #fff #6b6963 #6b6963 #fff;
}
.tree-actions svg {
  width: 5px;
  height: 5px;
  margin-left: 3px;
}
.tree-header {
  height: 13px;
  flex: none;
  margin: 1px 2px 0 1px;
  border: 1px solid #55534f;
  border-top-width: 2px;
}
.tree-pane {
  flex: 1;
  min-height: 0;
  overflow: hidden;
  background: #fff;
}
.tree {
  height: 237px;
  padding-left: 2px;
  display: grid;
  grid-template-rows: repeat(21, 1fr);
  position: relative;
}
.tree::before {
  content: "";
  position: absolute;
  left: 9px;
  top: 12px;
  bottom: 6px;
  border-left: 1px dotted #aaa;
}
.tree li {
  display: flex;
  align-items: center;
  gap: 1px;
  min-height: 0;
  line-height: 11px;
  position: relative;
  white-space: nowrap;
}
.tree .root {
  gap: 2px;
}
.tree i {
  width: 14px;
  height: 7px;
  padding-left: 4px;
  background: linear-gradient(#bbb, #bbb) 8px 3px / 6px 1px no-repeat;
}
.tree i svg {
  width: 7px;
  height: 7px;
}
.sash {
  width: 11px;
  flex: none;
  overflow: hidden;
}
.sash svg {
  width: 10px;
  height: 100%;
}

/* graphics window */
.viewport {
  flex: 1;
  min-width: 0;
  overflow: hidden;
  background: linear-gradient(#9c9b8e, #e3e2d4);
}
.viewport svg {
  width: 100%;
  height: 100%;
}
.viewport text {
  font-family: "Liberation Mono", "Noto Sans CJK SC", monospace;
  font-size: 9px;
}
.datum {
  fill: none;
  stroke: #a0724a;
}
.datum-name {
  fill: #98683f;
}
.note {
  fill: #f4f41c;
}
.note path {
  stroke: #f4f41c;
}
.note .cn {
  font-size: 6px;
  font-weight: bold;
}
.axis-name {
  fill: #8a6446;
}
.csys-name {
  fill: #3c3128;
}

/* message log */
.messages {
  height: 66px;
  flex: none;
  display: flex;
  justify-content: space-between;
  border-bottom: 1px solid #96938c;
}
.messages ul {
  padding: 8px 0 0 4px;
}
.messages li {
  display: flex;
  align-items: center;
  gap: 3px;
}
.messages li::before {
  content: "";
  width: 4px;
  height: 4px;
  border-radius: 50%;
  background: #1414b4;
}
.scrollbar {
  width: 11px;
  margin-top: 2px;
  display: flex;
  flex-direction: column;
  justify-content: space-between;
  background: #ebe9e5;
}
.scrollbar button {
  height: 11px;
  background: #d4d0c8;
  border: 1px solid;
  border-color: #fff #404040 #404040 #fff;
}
.scrollbar svg {
  width: 7px;
  height: 7px;
}

/* status line */
.statusbar {
  height: 18px;
  flex: none;
  display: flex;
  align-items: center;
  justify-content: flex-end;
  gap: 4px;
  padding-right: 26px;
}
.status-cell {
  width: 198px;
  height: 16px;
  display: flex;
  justify-content: flex-end;
  align-items: flex-end;
  padding-right: 2px;
  border-left: 1px solid #77746d;
  border-right: 1px solid #96938c;
}
.filter {
  width: 125px;
  height: 13px;
  display: flex;
  background: #fff;
  border: 1px solid;
  border-color: #55534f #fff #fff #55534f;
}
.filter select {
  flex: 1;
  appearance: none;
  padding-left: 2px;
}
.filter-arrow {
  width: 11px;
  display: flex;
  align-items: center;
  justify-content: center;
  background: #d4d0c8;
  border: 1px solid;
  border-color: #fff #404040 #404040 #fff;
}
.filter-arrow svg {
  width: 5px;
  height: 5px;
}
.signal {
  width: 10px;
  height: 16px;
}

/* taskbar */
.taskbar {
  height: 21px;
  flex: none;
  display: flex;
  align-items: center;
  gap: 3px;
  padding: 1px 2px;
  border-top: 1px solid #fff;
}
.start, .task {
  height: 16px;
  border: 1px solid;
  border-color: #fff #404040 #404040 #fff;
}
.start {
  width: 33px;
  gap: 1px;
}
.taskbar svg {
  width: 12px;
  height: 12px;
}
.quick {
  display: flex;
  gap: 4px;
  margin-left: 1px;
}
.taskbar > .chevron {
  width: 29px;
  padding-right: 2px;
  text-align: right;
  font-weight: bold;
}
.task {
  flex: 0 1 111px;
  min-width: 0;
  justify-content: flex-start;
  gap: 3px;
  padding-left: 2px;
  font-size: 7px;
  overflow: hidden;
}
.cn-only {
  font-size: 8px;
}
.task.current {
  background: #efede9;
  border-color: #404040 #fff #fff #404040;
}
.tray {
  margin-left: auto;
  display: flex;
  align-items: center;
  gap: 2px;
}
.tray-box {
  height: 16px;
  display: flex;
  align-items: center;
  gap: 1px;
  padding: 0 4px 0 3px;
  border: 1px solid;
  border-color: #8b8880 #fff #fff #8b8880;
}
.tray .chevron {
  width: 20px;
}
.tray time {
  width: 24px;
  margin-left: 3px;
}

/* forum stamp in the corner */
.watermark {
  position: absolute;
  right: 5px;
  bottom: 5px;
  width: 206px;
  height: 63px;
  display: flex;
  background: rgba(255, 255, 255, 0.3);
  pointer-events: none;
}
.watermark svg {
  width: 58px;
  height: 58px;
  opacity: 0.8;
}
.watermark-text {
  flex: 1;
  display: flex;
  flex-direction: column;
  align-items: flex-start;
}
.watermark strong {
  padding-left: 12px;
  font: bold 29px/40px "Noto Sans CJK SC", sans-serif;
  color: #6fb58b;
}
.watermark span {
  font: 16px/20px "Liberation Sans", sans-serif;
  color: rgba(150, 180, 172, 0.6);
}
```
